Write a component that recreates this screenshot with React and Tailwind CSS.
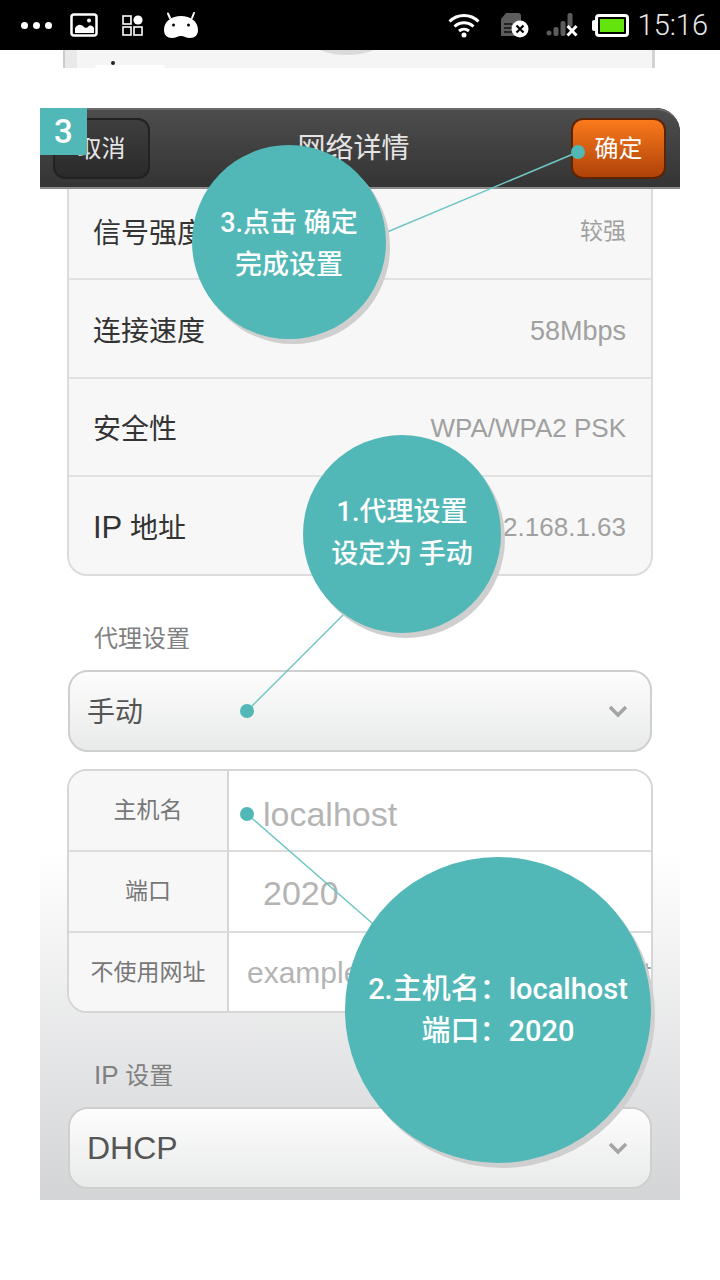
const sans = 'font-["Liberation_Sans","Noto_Sans_CJK_SC",sans-serif]';

function StatusBar() {
  return (
    <div className="relative flex h-[50px] items-center bg-black pl-[21px] pr-[12px]">
      <div className="flex w-[31px] gap-[5px]">
        <span className="h-[7px] w-[7px] rounded-full bg-white" />
        <span className="h-[7px] w-[7px] rounded-full bg-white" />
        <span className="h-[7px] w-[7px] rounded-full bg-white" />
      </div>
      <svg className="ml-[18px]" width="28" height="24" viewBox="0 0 28 24">
        <rect x="1.5" y="1.5" width="25" height="21" rx="2.5" fill="none" stroke="#fff" strokeWidth="2.5" />
        <path d="M5 20v-5c3-4 6-4 9-1 2 2 4 0 5-1 2-1 4 0 5 2v5z" fill="#fff" />
        <circle cx="19" cy="7.5" r="2" fill="#fff" />
      </svg>
      <svg className="ml-[24px]" width="22" height="22" viewBox="0 0 22 22">
        <rect x="1" y="2" width="8" height="8" fill="none" stroke="#fff" strokeWidth="1.6" />
        <circle cx="16" cy="6" r="4.6" fill="#fff" />
        <rect x="1" y="13" width="8" height="8" fill="none" stroke="#fff" strokeWidth="1.6" />
        <rect x="12" y="13" width="8" height="8" fill="none" stroke="#fff" strokeWidth="1.6" />
      </svg>
      <svg className="ml-[19px]" width="36" height="28" viewBox="0 0 36 28">
        <path d="M7 7 5 2.5M29 7l2-5" stroke="#fff" strokeWidth="2" strokeLinecap="round" />
        <path d="M18 5c9 0 17 5 17 14 0 5-3 8-8 8-4 0-6-2-9-2s-5 2-9 2c-5 0-8-3-8-8C1 10 9 5 18 5z" fill="#fff" />
        <circle cx="10.5" cy="14" r="1.5" fill="#000" />
        <circle cx="25.5" cy="14" r="1.5" fill="#000" />
      </svg>
      <div className="ml-auto flex items-center">
        <svg width="32" height="26" viewBox="0 0 32 26">
          <path d="M1.5 9.5C9.5 1.5 22.5 1.5 30.5 9.5M6.5 14.5c5.500-5 13.500-5 19 0M11 19c3-2.500 7-2.500 10 0" fill="none" stroke="#fff" strokeWidth="3" />
          <circle cx="16" cy="23" r="2.500" fill="#fff" />
        </svg>
        <svg className="ml-[20px]" width="30" height="26" viewBox="0 0 30 26">
          <path d="M1 7 6 1h12c2 0 3 1 3 3v20H1z" fill="#5c5c5c" />
          <path d="M4 12h8M4 16h8M4 20h8" stroke="#111" strokeWidth="1.5" />
          <circle cx="20" cy="17" r="8.500" fill="#fff" />
          <path d="m16.500 13.500 7 7m0-7-7 7" stroke="#000" strokeWidth="2.200" />
        </svg>
        <svg className="ml-[16px]" width="34" height="26" viewBox="0 0 34 26">
          <circle cx="3" cy="21" r="2.500" fill="#5c5c5c" />
          <rect x="7.500" y="15" width="5" height="9" rx="2" fill="#5c5c5c" />
          <rect x="14.500" y="9" width="5" height="15" rx="2" fill="#5c5c5c" />
          <rect x="21.500" y="1" width="5" height="14" rx="2" fill="#5c5c5c" />
          <path d="m21.500 14 9 9.500m0-9.500-9 9.500" stroke="#fff" strokeWidth="3" />
        </svg>
        <div className="ml-[12px] flex items-center">
          <span className="h-[11px] w-[3px] rounded-l-[2px] bg-white" />
          <div className="flex h-[23px] w-[34px] items-center justify-center rounded-[4px] border-[3px] border-white">
            <span className="h-[13px] w-[24px] bg-[#62e40c]" />
          </div>
        </div>
        <span className="ml-[9px] font-['Roboto',sans-serif] text-[29px] font-light leading-none text-[#e8e8e8]">15:16</span>
      </div>
    </div>
  );
}

function HeaderBar() {
  return (
    <div className="relative h-[81px] rounded-tr-[24px] border-t-2 border-b-2 border-t-[#6a6a6a] border-b-[#8a8a8a] bg-gradient-to-b from-[#4d4d4d] to-[#343434]">
      <div className="flex h-full items-center justify-between pl-[13px] pr-[14px]">
        <div className="flex h-[61px] w-[97px] items-center justify-center rounded-[12px] border-2 border-[#222] bg-gradient-to-b from-[#3e3e3e] to-[#2a2a2a] text-[24px] text-[#e6e6e6]">
          取消
        </div>
        <span className="mr-[14px] text-[28px] text-[#e4e4e4]">网络详情</span>
        <div className="flex h-[61px] w-[95px] items-center justify-center rounded-[12px] border-2 border-[#5c2405] bg-gradient-to-b from-[#fb7a1c] to-[#ae4208] text-[24px] text-white">
          确定
        </div>
      </div>
    </div>
  );
}

function InfoRow({ label, value, height, valueSize = "text-[26px]", last }) {
  return (
    <div className={`flex items-center justify-between pl-[24px] pr-[25px] ${height} ${last ? "" : "border-b-2 border-[#e2e2e2]"}`}>
      <span className="text-[28px] text-[#333333]">{label}</span>
      <span className={`${valueSize} text-[#a0a0a0]`}>{value}</span>
    </div>
  );
}

function SelectBox({ text, className, textSize }) {
  return (
    <div className={`flex h-[82px] items-center justify-between rounded-[20px] border-2 border-[#cfcfcf] bg-gradient-to-b from-[#fdfdfd] to-[#e9eaea] pl-[17px] pr-[22px] ${className}`}>
      <span className={`${textSize} text-[#555555]`}>{text}</span>
      <svg width="20" height="14" viewBox="0 0 20 14">
        <path d="M2 3l8 8 8-8" fill="none" stroke="#a4a4a4" strokeWidth="3.500" />
      </svg>
    </div>
  );
}

function ProxyRow({ label, height, children, last }) {
  return (
    <div className={`flex ${height} ${last ? "" : "border-b-2 border-[#dcdcdc]"}`}>
      <div className="flex w-[160px] shrink-0 items-center justify-center border-r-2 border-[#d6d6d6] bg-[#f7f7f7] text-[23px] text-[#777777]">
        {label}
      </div>
      <div className="flex min-w-0 flex-1 items-center overflow-hidden whitespace-nowrap bg-white text-[34px] text-[#b4b4b4]">
        {children}
      </div>
    </div>
  );
}

function Bubble({ className, children }) {
  return (
    <div className={`absolute flex flex-col items-center rounded-full bg-[#52b8b7] font-['Roboto','Noto_Sans_CJK_SC',sans-serif] font-medium text-white shadow-[4px_5px_0_#cfcfcf] ${className}`}>
      {children}
    </div>
  );
}

export default function App() {
  return (
    <div className={`relative h-[1280px] w-[720px] overflow-hidden bg-white ${sans}`}>
      <StatusBar />

      {/* bottom edge of the previous screenshot */}
      <div className="relative ml-[63px] h-[18px] w-[592px] overflow-hidden border-l-2 border-r-[3px] border-l-[#cccccc] border-r-[#d4d4d4] bg-[#f5f5f5]">
        <div className="absolute left-0 top-0 h-full w-[12px] bg-[#e9e9e9]" />
        <div className="absolute left-[244px] top-[-30px] h-[35px] w-[76px] rounded-[50%] bg-[#dadada]" />
        <div className="absolute left-[46px] top-[11px] h-[4px] w-[4px] rounded-full bg-[#222]" />
        <div className="absolute left-[30px] top-[15px] h-[3px] w-[70px] rounded-t-[2px] bg-white" />
      </div>

      <div className="mx-[40px] mt-[40px] h-[1092px] overflow-hidden rounded-tr-[24px] bg-black">
        <HeaderBar />
        <div className="h-[1011px] bg-[linear-gradient(to_bottom,#ffffff_0,#ffffff_660px,#d3d4d6_1011px)] pt-0">
          <div className="mx-[27px] rounded-b-[20px] border-x-2 border-b-2 border-[#dcdcdc] bg-[#f7f7f7]">
            <InfoRow label="信号强度" value="较强" valueSize="pb-[4px] text-[23px]" height="h-[91px]" />
            <InfoRow label="连接速度" value="58Mbps" valueSize="text-[27px]" height="h-[99px] pt-[6px]" />
            <InfoRow label="安全性" value="WPA/WPA2 PSK" valueSize="pb-[4px] text-[26px]" height="h-[98px] pt-[6px]" />
            <InfoRow
              label={<><span className="text-[31px]">IP</span> 地址</>}
              value="192.168.1.63"
              valueSize="pb-[2px] text-[26px]"
              height="h-[97px] pt-[5px]"
              last
            />
          </div>
          <div className="ml-[54px] mt-[46px] text-[24px] leading-[34px] text-[#808080]">代理设置</div>
          <SelectBox text="手动" textSize="pt-[3px] text-[28px]" className="mx-[28px] mt-[14px]" />
          <div className="mx-[27px] mt-[17px] overflow-hidden rounded-[20px] border-2 border-[#d6d6d6]">
            <ProxyRow label="主机名" height="h-[81px]">
              <span className="pl-[34px] pt-[8px]">localhost</span>
            </ProxyRow>
            <ProxyRow label="端口" height="h-[81px]">
              <span className="pl-[34px] pt-[3px]">2020</span>
            </ProxyRow>
            <ProxyRow label="不使用网址" height="h-[78px]" last>
              <div className="flex w-full justify-between pl-[18px] text-[30px]">
                <span>example.com</span>
                <span className="text-[#999999]">,mycomp.test</span>
              </div>
            </ProxyRow>
          </div>
          <div className="ml-[54px] mt-[45px] text-[24px] leading-[34px] text-[#808080]">
            <span className="text-[26px]">IP</span> 设置
          </div>
          <SelectBox text="DHCP" textSize="text-[32px]" className="mx-[28px] mt-[14px]" />
        </div>
      </div>

      {/* tutorial overlay */}
      <svg className="absolute left-0 top-0" width="720" height="1280" viewBox="0 0 720 1280">
        <g stroke="#6fc6c5" strokeWidth="1.500">
          <line x1="578" y1="152" x2="380" y2="235" />
          <line x1="247" y1="711" x2="350" y2="608" />
          <line x1="247" y1="814" x2="380" y2="930" />
        </g>
        <circle cx="578" cy="152" r="7" fill="#52b8b7" />
        <circle cx="247" cy="711" r="7" fill="#52b8b7" />
        <circle cx="247" cy="814" r="7" fill="#52b8b7" />
      </svg>

      <div className="absolute left-[40px] top-[108px] flex h-[47px] w-[47px] items-center justify-center bg-[#52b8b7] font-['Roboto',sans-serif] text-[33px] font-medium text-white">
        3
      </div>

      <Bubble className="left-[192px] top-[145px] h-[194px] w-[194px] gap-[13px] pt-[64px] text-[27px] leading-[29px]">
        <span>3.点击 确定</span>
        <span>完成设置</span>
      </Bubble>
      <Bubble className="left-[303px] top-[435px] h-[198px] w-[198px] gap-[13px] pt-[63px] text-[27px] leading-[29px]">
        <span>1.代理设置</span>
        <span>设定为 手动</span>
      </Bubble>
      <Bubble className="left-[345px] top-[857px] h-[306px] w-[306px] gap-[12px] pt-[117px] text-[29px] leading-[30px]">
        <span>2.主机名：localhost</span>
        <span>端口：2020</span>
      </Bubble>
    </div>
  );
}
